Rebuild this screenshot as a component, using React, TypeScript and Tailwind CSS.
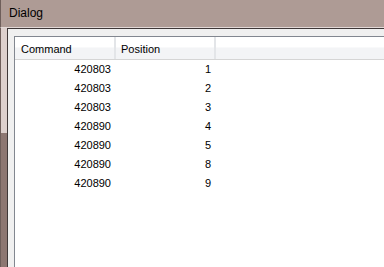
const rows = [
  { cmd: "420803", pos: 1 },
  { cmd: "420803", pos: 2 },
  { cmd: "420803", pos: 3 },
  { cmd: "420890", pos: 4 },
  { cmd: "420890", pos: 5 },
  { cmd: "420890", pos: 8 },
  { cmd: "420890", pos: 9 },
]

export default function App() {
  return (
    <div
      className="w-[384px] h-[267px] overflow-hidden flex flex-col bg-[#ae9b95] text-[11px] text-black"
      style={{ fontFamily: '"Liberation Sans", Arial, sans-serif' }}
    >
      {/* title bar */}
      <div className="h-[28px] shrink-0 flex items-center pl-[8px] pb-px text-[12px] text-black bg-[#ae9b95] border-l border-b border-l-[#6e5e5a] border-b-[#e2d8d6]">
        Dialog
      </div>
      <div className="flex-1 flex min-h-0">
        {/* left frame */}
        <div className="w-[7px] shrink-0 flex flex-col border-l border-[#6e5e5a]">
          <div className="h-[105px] bg-[#ddd0cd]" />
          <div className="flex-1 bg-[#8d7772]" />
        </div>
        <div className="flex-1 flex flex-col bg-[#f0f0f0] border-l border-t border-[#3f3838]">
          <div className="flex-1 flex flex-col mt-[7px] ml-[6px] bg-white border-l border-t border-[#828790]">
            {/* header */}
            <div className="h-[23px] flex border-b border-[#d5d5d5] bg-[linear-gradient(#ffffff_0%,#ffffff_45%,#f3f4f6_50%,#f3f4f6_100%)]">
              <div className="w-[101px] flex items-center pl-[6px] pt-[3px] border-r-2 border-[#e3e5e8]">Command</div>
              <div className="w-[100px] flex items-center pl-[5px] pt-[3px] border-r-2 border-[#e3e5e8]">Position</div>
              <div className="flex-1" />
            </div>
            {rows.map((r, i) => (
              <div key={i} className="h-[19px] flex items-center">
                <div className="w-[96px] text-right">{r.cmd}</div>
                <div className="w-[100px] text-right">{r.pos}</div>
              </div>
            ))}
          </div>
        </div>
      </div>
    </div>
  )
}
